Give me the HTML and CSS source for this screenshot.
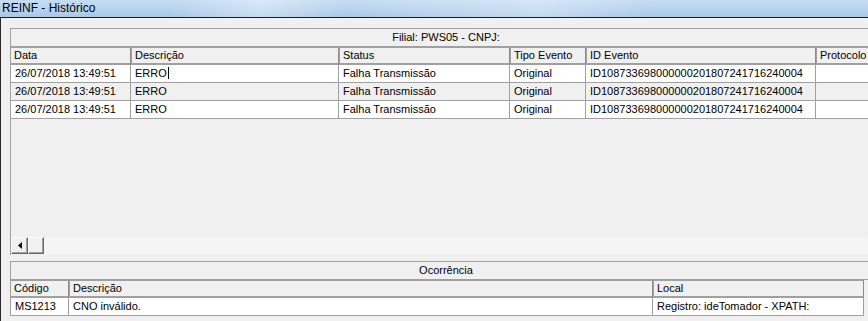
FILE: index.html
```html
<!DOCTYPE html>
<html lang="pt">

<head>
    <meta charset="UTF-8">
    <title>REINF - Histórico</title>
    <link rel="stylesheet" href="styles.css">
</head>

<body>

    <div class="titlebar">REINF - Histórico</div>

    <div class="window">

        <div class="grid grid-top">
            <div class="caption">Filial: PWS05 - CNPJ:</div>

            <div class="row head">
                <div class="cell c-data">Data</div>
                <div class="cell c-desc">Descrição</div>
                <div class="cell c-status">Status</div>
                <div class="cell c-tipo">Tipo Evento</div>
                <div class="cell c-id">ID Evento</div>
                <div class="cell c-prot">Protocolo</div>
            </div>

            <div class="row">
                <div class="cell c-data">26/07/2018 13:49:51</div>
                <div class="cell c-desc"><span class="caret">ERRO</span></div>
                <div class="cell c-status">Falha Transmissão</div>
                <div class="cell c-tipo">Original</div>
                <div class="cell c-id">ID108733698000000201807241716240004</div>
                <div class="cell c-prot"></div>
            </div>

            <div class="row alt">
                <div class="cell c-data">26/07/2018 13:49:51</div>
                <div class="cell c-desc">ERRO</div>
                <div class="cell c-status">Falha Transmissão</div>
                <div class="cell c-tipo">Original</div>
                <div class="cell c-id">ID108733698000000201807241716240004</div>
                <div class="cell c-prot"></div>
            </div>

            <div class="row">
                <div class="cell c-data">26/07/2018 13:49:51</div>
                <div class="cell c-desc">ERRO</div>
                <div class="cell c-status">Falha Transmissão</div>
                <div class="cell c-tipo">Original</div>
                <div class="cell c-id">ID108733698000000201807241716240004</div>
                <div class="cell c-prot"></div>
            </div>

            <div class="filler"></div>

            <div class="hscroll">
                <div class="sbtn">
                    <svg width="4" height="7" viewBox="0 0 4 7"><path d="M4 0 L4 7 L0 3.5 Z" fill="#000"/></svg>
                </div>
                <div class="sbtn thumb"></div>
                <div class="track"></div>
            </div>
        </div>

        <div class="grid grid-bottom">
            <div class="caption">Ocorrência</div>

            <div class="row head">
                <div class="cell o-cod">Código</div>
                <div class="cell o-desc">Descrição</div>
                <div class="cell o-local">Local</div>
            </div>

            <div class="row">
                <div class="cell o-cod">MS1213</div>
                <div class="cell o-desc">CNO inválido.</div>
                <div class="cell o-local">Registro: ideTomador - XPATH:</div>
            </div>
        </div>

    </div>

</body>

</html>
```

FILE: styles.css
```css
html,
body {
    margin: 0;
    width: 868px;
    height: 321px;
    overflow: hidden;
    background-color: #f0f0f0;
    font-family: "Liberation Sans", Arial, sans-serif;
    font-size: 11px;
    color: #000;
}

.titlebar {
    height: 17px;
    line-height: 16px;
    padding-left: 2px;
    font-size: 12px;
    border-bottom: 1px solid #1c1c1c;
    background:
        linear-gradient(100deg, rgba(255, 255, 255, 0) 20%, rgba(255, 255, 255, 0.35) 30%, rgba(255, 255, 255, 0) 40%, rgba(255, 255, 255, 0.3) 62%, rgba(255, 255, 255, 0) 75%),
        linear-gradient(#c5dcf2, #b4d2ee 60%, #a9c8e6);
}

.window {
    border-left: 1px solid #2a2a2a;
    padding: 10px 0 0 9px;
    height: 303px;
    box-sizing: border-box;
}

.grid {
    width: 870px;
    border-left: 1px solid #a0a0a0;
    border-top: 1px solid #a0a0a0;
}

.grid-top {
    height: 226px;
    display: flex;
    flex-direction: column;
}

.grid-bottom {
    margin-top: 6px;
}

.caption {
    height: 17px;
    line-height: 17px;
    text-align: center;
    border-bottom: 1px solid #a0a0a0;
    padding-left: 0;
}

.row {
    display: flex;
    height: 18px;
    flex-shrink: 0;
}

.cell {
    box-sizing: border-box;
    height: 18px;
    line-height: 17px;
    padding-left: 4px;
    background-color: #fff;
    border-right: 1px solid #a0a0a0;
    border-bottom: 1px solid #a0a0a0;
    white-space: nowrap;
    overflow: hidden;
}

.alt .cell {
    background-color: #f0f0f0;
}

.head .cell {
    background-color: #f0f0f0;
    border-top: 1px solid #a0a0a0;
    border-left: 1px solid #a0a0a0;
    border-right: 1px solid #8c8c8c;
    border-bottom: 2px solid #a0a0a0;
    line-height: 15px;
    padding-left: 3px;
}

.head .cell:first-child {
    border-left: 0;
}

.c-data { width: 120px; }
.c-desc { width: 208px; }
.c-status { width: 171px; }
.c-tipo { width: 76px; }
.c-id { width: 230px; }
.c-prot { width: 65px; }

.o-cod { width: 58px; }
.o-desc { width: 584px; }
.o-local { width: 211px; }

.caret {
    border-right: 1px solid #000;
    padding-right: 1px;
}

.filler {
    flex: 1;
}

.hscroll {
    display: flex;
    height: 17px;
    margin-bottom: 1px;
}

.sbtn {
    width: 17px;
    height: 17px;
    box-sizing: border-box;
    background-color: #f0f0f0;
    border: 1px solid;
    border-color: #fff #696969 #696969 #fff;
    box-shadow: inset -1px -1px #a0a0a0;
    display: flex;
    align-items: center;
    justify-content: center;
}

.thumb {
    width: 16px;
}

.track {
    flex: 1;
    background-color: #f0f0f0;
    background-image: repeating-conic-gradient(#fafafa 0 25%, #f0f0f0 0 50%);
    background-size: 2px 2px;
}
```
